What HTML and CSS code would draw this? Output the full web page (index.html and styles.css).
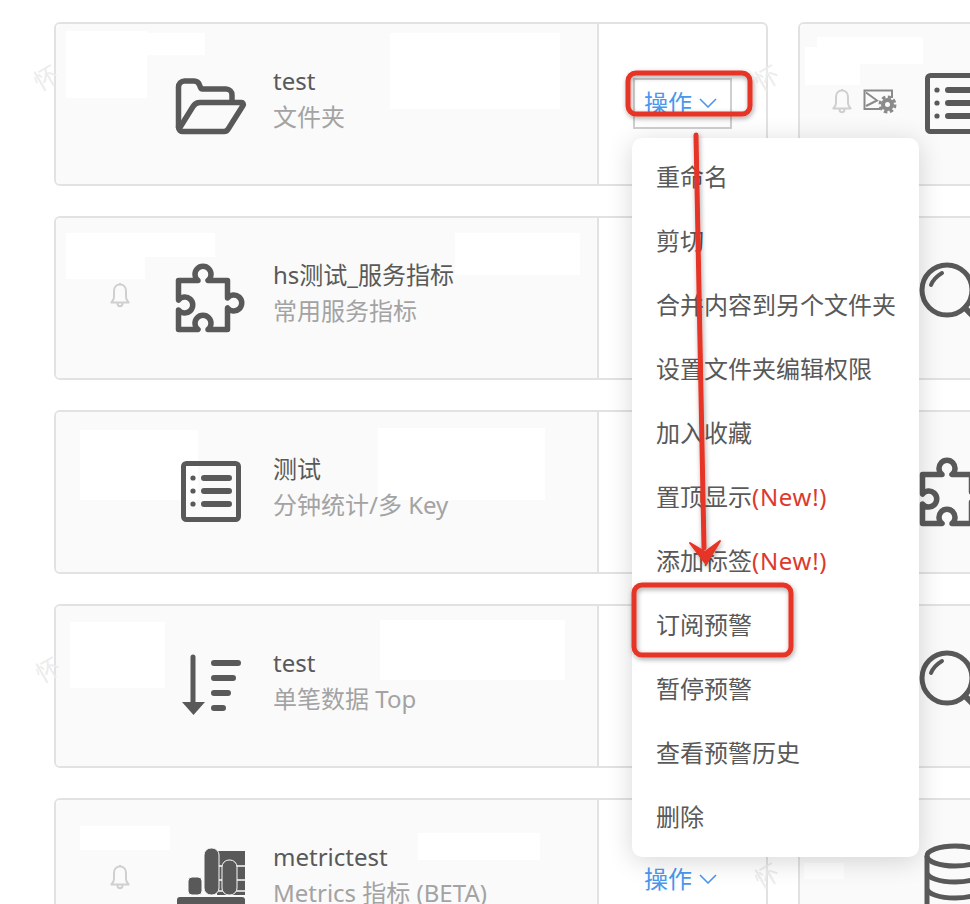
FILE: index.html
```html
<!DOCTYPE html>
<html lang="zh-CN">
<head>
<meta charset="utf-8">
<title>仪表盘列表</title>
<link rel="stylesheet" href="styles.css">
</head>
<body>
<svg class="defs" width="0" height="0" aria-hidden="true">
  <symbol id="i-bell" viewBox="0 0 20 26">
    <path d="M10 2.500c-3.800 0-6 3-6 6.500v6c0 2.500-1.200 4-2.600 5.500h17.200c-1.400-1.500-2.600-3-2.600-5.500v-6c0-3.500-2.200-6.500-6-6.500zM10 1v1.500M7.500 21c0 2 1 3.300 2.500 3.300s2.500-1.300 2.500-3.300" fill="none" stroke="currentColor" stroke-width="2" stroke-linejoin="round"/>
  </symbol>
  <symbol id="i-console" viewBox="0 0 34 26">
    <path d="M17 21H1.500V2.500H29V10" fill="none" stroke="currentColor" stroke-width="2"/>
    <path d="M3 4.500l11 8L3 18" fill="none" stroke="currentColor" stroke-width="2"/>
    <circle cx="24.500" cy="16.500" r="4.500" fill="none" stroke="currentColor" stroke-width="4"/>
    <circle cx="24.500" cy="16.500" r="7.500" fill="none" stroke="currentColor" stroke-width="3" stroke-dasharray="3.500 2.400"/>
  </symbol>
  <symbol id="i-folder" viewBox="0 0 72 72">
    <g fill="none" stroke="currentColor" stroke-width="5.500" stroke-linejoin="round" stroke-linecap="round">
      <path d="M3.500 60V20a6 6 0 0 1 6-6h9.500a6 6 0 0 1 5.500 4l1 2.500c.4 1 1 1.500 2 1.500H51a6 6 0 0 1 6 6v6"/>
      <path d="M3.500 60c0 3 2 4.500 4.500 4.500h41c2 0 3.500-1 4.500-3L68 38.500c.8-1.500 0-3-1.500-3H25c-3 0-5.500 1.500-7 4L4 62"/>
    </g>
  </symbol>
  <symbol id="i-puzzle" viewBox="0 0 72 72">
    <path d="M3.500 19.500H23a8 8 0 1 1 10 0H52.500V37a8 8 0 1 1 0 10V68.500H33a8 8 0 1 0-10 0H3.500V49a8 8 0 1 0 0-10z" fill="none" stroke="currentColor" stroke-width="5.500" stroke-linejoin="round"/>
  </symbol>
  <symbol id="i-list" viewBox="0 0 72 72">
    <rect x="8.500" y="8.500" width="55" height="56" rx="3" fill="none" stroke="currentColor" stroke-width="5"/>
    <circle cx="18" cy="23" r="2.600" fill="currentColor"/>
    <circle cx="18" cy="36" r="2.600" fill="currentColor"/>
    <circle cx="18" cy="49" r="2.600" fill="currentColor"/>
    <path d="M29 23h25M29 36h25M29 49h25" stroke="currentColor" stroke-width="6" stroke-linecap="round"/>
  </symbol>
  <symbol id="i-sort" viewBox="0 0 72 72">
    <path d="M18 8v46" stroke="currentColor" stroke-width="5" stroke-linecap="round"/>
    <path d="M7 53h23L18.500 66z" fill="currentColor"/>
    <path d="M39 14h24M39 29h19M39 44h14M39 59h9" stroke="currentColor" stroke-width="6" stroke-linecap="round"/>
  </symbol>
  <symbol id="i-metric" viewBox="0 0 72 72">
    <rect x="42" y="8" width="28" height="44" fill="currentColor"/>
    <path d="M30 23h40M30 37h40M30 48h40" stroke="#fafafa" stroke-width="1.500"/>
    <rect x="13" y="34" width="14" height="18" rx="4" fill="currentColor" stroke="#fafafa"/>
    <rect x="29" y="5" width="15" height="47" rx="7" fill="currentColor" stroke="#fafafa"/>
    <rect x="47" y="17" width="15" height="35" rx="7" fill="currentColor" stroke="#fafafa"/>
    <rect x="2" y="54" width="68" height="16" rx="3" fill="currentColor"/>
  </symbol>
  <symbol id="i-search" viewBox="0 0 72 72">
    <circle cx="28" cy="29" r="25" fill="none" stroke="currentColor" stroke-width="5"/>
    <path d="M46 47l20 20" stroke="currentColor" stroke-width="6" stroke-linecap="round"/>
    <path d="M12 24c2-5 6-9 11-12" fill="none" stroke="currentColor" stroke-width="4" stroke-linecap="round"/>
  </symbol>
  <symbol id="i-db" viewBox="0 0 72 72">
    <g fill="none" stroke="currentColor" stroke-width="5">
      <ellipse cx="36" cy="13" rx="28" ry="10"/>
      <path d="M8 13v48c0 6 13 10 28 10s28-4 28-10V13M8 29c0 6 13 10 28 10s28-4 28-10M8 45c0 6 13 10 28 10s28-4 28-10"/>
    </g>
  </symbol>
  <symbol id="i-down" viewBox="0 0 18 10">
    <path d="M1 1l8 8 8-8" fill="none" stroke="currentColor" stroke-width="1.600"/>
  </symbol>
</svg>

<main class="page">
  <section class="grid">
    <article class="card">
      <div class="card-main">
        <span class="patch p1a"></span><span class="patch p1b"></span><span class="patch p1c"></span>
        <div class="alerts"></div>
        <svg class="type-icon"><use href="#i-folder"/></svg>
        <div class="card-text"><div class="card-title">test</div><div class="card-sub">文件夹</div></div>
      </div>
      <div class="card-ops"><a class="ops ops-focus">操作<svg class="chev"><use href="#i-down"/></svg></a></div>
    </article>
    <article class="card">
      <div class="card-main">
        <span class="patch p2a"></span><span class="patch p2b"></span>
        <div class="alerts alerts-wide">
          <svg class="bell"><use href="#i-bell"/></svg>
          <svg class="console"><use href="#i-console"/></svg>
        </div>
        <svg class="type-icon"><use href="#i-list"/></svg>
      </div>
    </article>

    <article class="card">
      <div class="card-main">
        <span class="patch p3a"></span><span class="patch p3b"></span><span class="patch p3c"></span>
        <div class="alerts"><svg class="bell"><use href="#i-bell"/></svg></div>
        <svg class="type-icon"><use href="#i-puzzle"/></svg>
        <div class="card-text"><div class="card-title">hs测试_服务指标</div><div class="card-sub">常用服务指标</div></div>
      </div>
      <div class="card-ops"></div>
    </article>
    <article class="card">
      <div class="card-main">
        <div class="alerts"></div>
        <svg class="type-icon"><use href="#i-search"/></svg>
      </div>
    </article>

    <article class="card">
      <div class="card-main">
        <span class="patch p4a"></span><span class="patch p4b"></span>
        <div class="alerts"></div>
        <svg class="type-icon"><use href="#i-list"/></svg>
        <div class="card-text"><div class="card-title">测试</div><div class="card-sub">分钟统计/多 Key</div></div>
      </div>
      <div class="card-ops"></div>
    </article>
    <article class="card">
      <div class="card-main">
        <div class="alerts"></div>
        <svg class="type-icon"><use href="#i-puzzle"/></svg>
      </div>
    </article>

    <article class="card">
      <div class="card-main">
        <span class="patch p5a"></span><span class="patch p5b"></span>
        <div class="alerts"></div>
        <svg class="type-icon"><use href="#i-sort"/></svg>
        <div class="card-text"><div class="card-title">test</div><div class="card-sub">单笔数据 Top</div></div>
      </div>
      <div class="card-ops"></div>
    </article>
    <article class="card">
      <div class="card-main">
        <div class="alerts"></div>
        <svg class="type-icon"><use href="#i-search"/></svg>
      </div>
    </article>

    <article class="card">
      <div class="card-main">
        <span class="patch p6a"></span><span class="patch p6b"></span>
        <div class="alerts"><svg class="bell"><use href="#i-bell"/></svg></div>
        <svg class="type-icon"><use href="#i-metric"/></svg>
        <div class="card-text"><div class="card-title">metrictest</div><div class="card-sub">Metrics 指标 (BETA)</div></div>
      </div>
      <div class="card-ops"><a class="ops">操作<svg class="chev"><use href="#i-down"/></svg></a></div>
    </article>
    <article class="card">
      <div class="card-main">
        <span class="patch p7a"></span>
        <div class="alerts"></div>
        <svg class="type-icon"><use href="#i-db"/></svg>
      </div>
    </article>
  </section>

  <span class="mark m1">怀</span>
  <span class="mark m2">怀</span>
  <span class="mark m3">怀</span>
  <span class="mark m4">怀</span>

  <ul class="menu">
    <li class="menu-item">重命名</li>
    <li class="menu-item">剪切</li>
    <li class="menu-item">合并内容到另个文件夹</li>
    <li class="menu-item">设置文件夹编辑权限</li>
    <li class="menu-item">加入收藏</li>
    <li class="menu-item">置顶显示<span class="new">(New!)</span></li>
    <li class="menu-item">添加标签<span class="new">(New!)</span></li>
    <li class="menu-item">订阅预警</li>
    <li class="menu-item">暂停预警</li>
    <li class="menu-item">查看预警历史</li>
    <li class="menu-item">删除</li>
  </ul>

  <svg class="notes" viewBox="0 0 970 904" aria-hidden="true">
    <defs>
      <filter id="soft" x="-20%" y="-20%" width="140%" height="140%">
        <feDropShadow dx="1" dy="2" stdDeviation="2.500" flood-color="#000" flood-opacity=".35"/>
      </filter>
    </defs>
    <g filter="url(#soft)" fill="none" stroke="#e63425">
      <rect x="628" y="73" width="122" height="41" rx="8" stroke-width="5"/>
      <rect x="634" y="585" width="157" height="70" rx="8" stroke-width="5"/>
      <path d="M696 135L704 548" stroke-width="5" stroke-linecap="round"/>
      <path d="M690 543L706 564L720 541L705 552z" fill="#e63425" stroke-width="2" stroke-linejoin="round"/>
    </g>
  </svg>
</main>
</body>
</html>
```
FILE: styles.css
```css
* { box-sizing: border-box; }
html, body { margin: 0; padding: 0; height: 904px; overflow: hidden; background: #fff; }
body {
  font-family: "Noto Sans", "Noto Sans CJK SC", "Liberation Sans", sans-serif;
  font-size: 24px;
  color: #595959;
}
.defs { position: absolute; }

.page { position: relative; width: 970px; height: 904px; overflow: hidden; }

.grid {
  display: grid;
  grid-template-columns: 714px 714px;
  grid-auto-rows: 164px;
  gap: 30px;
  padding: 22px 0 0 54px;
}

.card {
  display: flex;
  height: 164px;
  border: 2px solid #e2e2e2;
  border-radius: 6px;
  background: #fff;
  overflow: hidden;
}
.card-main {
  position: relative;
  flex: 0 0 543px;
  display: flex;
  align-items: flex-start;
  padding-top: 41px;
  background: #fafafa;
  border-right: 2px solid #e2e2e2;
}
.alerts {
  position: relative;
  flex: 0 0 119px;
  height: 72px;
  display: flex;
  justify-content: flex-end;
  align-items: center;
  gap: 11px;
  padding-right: 45px;
}
.alerts-wide { padding-right: 22px; }
.bell { width: 20px; height: 26px; color: #cfcfcf; }
.console { width: 34px; height: 26px; color: #8a8a8a; }
.type-icon { position: relative; flex: 0 0 72px; width: 72px; height: 72px; margin-top: 2px; color: #595959; }
.card-text { position: relative; margin-left: 26px; margin-top: -2px; }
.card-title { line-height: 35px; white-space: nowrap; }
.card-sub { line-height: 36px; margin-top: 1px; color: #a3a3a3; white-space: nowrap; }

.card-ops { flex: 1; display: flex; justify-content: center; align-items: center; padding-bottom: 2px; }
.ops {
  width: 99px;
  height: 51px;
  display: flex;
  align-items: center;
  gap: 7px;
  padding: 0 0 4px 9px;
  border: 2px solid transparent;
  color: #4a97ec;
  white-space: nowrap;
}
.ops-focus { border-color: #cfcfcf; }
.chev { width: 18px; height: 10px; margin-top: 3px; color: #4a97ec; }

.patch { position: absolute; background: #fff; }
.p1a { left: 10px; top: 7px; width: 81px; height: 67px; }
.p1b { left: 91px; top: 9px; width: 58px; height: 22px; }
.p1c { left: 334px; top: 9px; width: 170px; height: 76px; }
.p2a { left: 17px; top: 13px; width: 106px; height: 27px; }
.p2b { left: 5px; top: 23px; width: 55px; height: 38px; }
.p3a { left: 10px; top: 15px; width: 79px; height: 46px; }
.p3b { left: 89px; top: 15px; width: 70px; height: 24px; }
.p3c { left: 399px; top: 15px; width: 125px; height: 42px; }
.p4a { left: 24px; top: 18px; width: 118px; height: 70px; }
.p4b { left: 322px; top: 16px; width: 167px; height: 72px; }
.p5a { left: 14px; top: 16px; width: 95px; height: 66px; }
.p5b { left: 324px; top: 14px; width: 185px; height: 60px; }
.p6a { left: 24px; top: 26px; width: 90px; height: 24px; }
.p6b { left: 362px; top: 33px; width: 122px; height: 27px; }
.p7a { left: 4px; top: 63px; width: 40px; height: 16px; }

.mark {
  position: absolute;
  color: #ececec;
  font-size: 24px;
  line-height: 1;
  transform: rotate(-30deg);
}
.m1 { left: 34px; top: 66px; }
.m2 { left: 755px; top: 66px; }
.m3 { left: 36px; top: 658px; }
.m4 { left: 755px; top: 864px; }

.menu {
  position: absolute;
  left: 632px;
  top: 138px;
  width: 287px;
  height: 719px;
  margin: 0;
  padding: 7px 0 8px;
  list-style: none;
  background: #fff;
  border-radius: 10px;
  box-shadow: 0 4px 26px rgba(0, 0, 0, .16);
}
.menu-item {
  height: 64px;
  line-height: 64px;
  padding-left: 24px;
  color: #595959;
  white-space: nowrap;
}
.new { color: #dc3a2e; letter-spacing: .7px; }

.notes { position: absolute; left: 0; top: 0; width: 970px; height: 904px; pointer-events: none; }
```
